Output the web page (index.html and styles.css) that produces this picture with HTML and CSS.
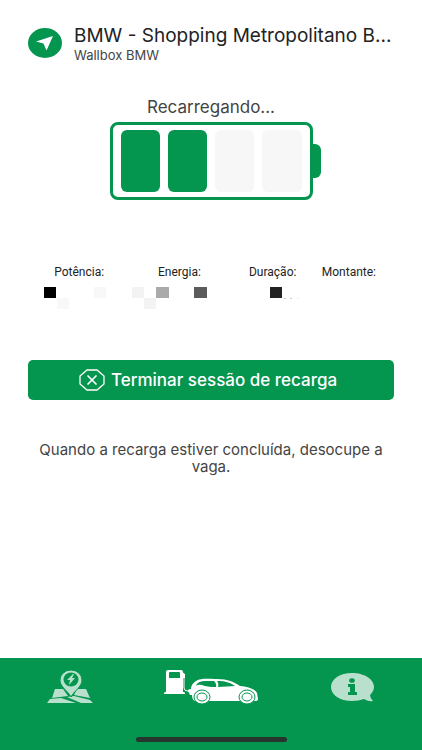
FILE: index.html
```html
<!DOCTYPE html>
<html lang="pt">
<head>
<meta charset="utf-8">
<meta name="viewport" content="width=device-width, initial-scale=1">
<title>Recarregando</title>
<link rel="stylesheet" href="styles.css">
</head>
<body>
<header class="station">
  <a class="station-link" href="#" aria-label="Navegar">
    <svg width="34" height="30" viewBox="0 0 34 30" aria-hidden="true">
      <ellipse cx="17" cy="15" rx="17" ry="15" fill="#04954f"/>
      <path d="M25 8 8 13.500 15.500 15.500 18.500 22.500Z" fill="#fff"/>
    </svg>
  </a>
  <div class="station-text">
    <h1 class="station-name">BMW - Shopping Metropolitano B...</h1>
    <p class="station-type">Wallbox BMW</p>
  </div>
</header>
<main class="session">
  <p class="status">Recarregando...</p>
  <div class="battery">
    <div class="battery-case">
      <span class="cell cell-full"></span>
      <span class="cell cell-full"></span>
      <span class="cell"></span>
      <span class="cell"></span>
    </div>
    <span class="battery-tip"></span>
  </div>
  <dl class="stats">
    <div class="stat"><dt>Potência:</dt><dd>
      <svg width="100" height="24" viewBox="0 0 100 24" aria-hidden="true">
        <path fill="#000" d="M15 1h12v11H15z"/><path fill="#f8f8f8" d="M28 12h12v11H28zM65 1h12v11H65z"/>
      </svg></dd></div>
    <div class="stat"><dt>Energia:</dt><dd>
      <svg width="100" height="24" viewBox="0 0 100 24" aria-hidden="true">
        <path fill="#f3f3f3" d="M3 1h12v11H3zM15 12h12v11H15z"/><path fill="#aaa" d="M27 1h13v11H27z"/><path fill="#5b5b5b" d="M65 1h13v11H65z"/>
      </svg></dd></div>
    <div class="stat"><dt>Duração:</dt><dd>
      <svg width="86" height="24" viewBox="0 0 86 24" aria-hidden="true">
        <path fill="#222" d="M40 1h12v11H40z"/><path fill="#ccc" d="M54 12h2v1h-2zM60 12h2v1h-2z"/><path fill="#eee" d="M67 12h2v1h-2z"/>
      </svg></dd></div>
    <div class="stat"><dt>Montante:</dt><dd></dd></div>
  </dl>
  <button class="stop" type="button">
    <svg width="26" height="22" viewBox="0 0 26 22" fill="none" stroke="#fff" aria-hidden="true">
      <path d="M8 1h10l7 6v8l-7 6H8l-7-6V7z" stroke-width="1.300"/>
      <path d="m9 7 8 8m0-8-8 8" stroke-width="1.700" stroke-linecap="round"/>
    </svg>
    <span>Terminar sessão de recarga</span>
  </button>
  <p class="note">Quando a recarga estiver concluída, desocupe a vaga.</p>
</main>
<footer class="tabs">
  <nav class="tab-list">
    <a class="tab" href="#" aria-label="Mapa">
      <svg width="48" height="36" viewBox="0 0 48 36" aria-hidden="true">
        <g fill="#b9e0cc">
          <path d="M9 20h8l5 7-16 2zM1 34l3-4 11-1 15 5zM35 34l-14-6 7-1 16 4 3 3zM31 20h9l4 9-16-3z"/>
          <path d="M25 28c-3-6-11-10-11-17a11 10 0 0 1 22 0c0 7-8 11-11 17z" stroke="#04954f" stroke-width="1"/>
        </g>
        <ellipse cx="25" cy="10.500" rx="7.500" ry="7" fill="#04954f"/>
        <path d="m27 5-6 6h3l-1 5 6-7h-3l2-4z" fill="#b9e0cc"/>
      </svg>
    </a>
    <a class="tab" href="#" aria-label="Recarga" aria-current="page">
      <svg width="96" height="36" viewBox="0 0 96 36" aria-hidden="true">
        <path d="M5 1h13q2 0 2 2v20h1q1 0 1 2H1q0-2 1-2h1V3q0-2 2-2z" fill="#fff"/>
        <path d="M6 4q0-1 1-1h9q1 0 1 1v5H6z" fill="#04954f"/>
        <path d="m18 2 3 3v14q0 3 4 3h4" fill="none" stroke="#fff" stroke-width="1"/>
        <path d="M19 3l3 2v4h-3z" fill="#fff"/>
        <path d="M25 22q0-2 3-2 0-5 5-8c5-3 11-2 21-2 11 0 17 3 23 7 9 1 15 3 17 7l1 6q0 2-3 2H32q-3-1-3-6h-2z" fill="#fff"/>
        <path d="M33 17q1-5 10-5h8q3 3 2 6-9 0-14-2-4-1-6 1zM54 12c9 0 14 2 18 5l-17 1q1-4-1-6z" fill="#04954f"/>
        <g fill="#fff" stroke="#04954f"><ellipse cx="39" cy="28" rx="8" ry="7"/><ellipse cx="84" cy="28" rx="8" ry="7"/></g>
        <g fill="none" stroke="#04954f" stroke-width="1"><ellipse cx="39" cy="28" rx="5" ry="4"/><ellipse cx="84" cy="28" rx="5" ry="4"/></g>
      </svg>
    </a>
    <a class="tab" href="#" aria-label="Informações">
      <svg width="44" height="32" viewBox="0 0 44 32" aria-hidden="true">
        <path d="M22 2C10 2 1 8 1 16s9 14 21 14q7 0 12-2 5 3 9 2-3-3-3-6 4-4 4-8C44 8 34 2 22 2z" fill="#b9e0cc"/>
        <ellipse cx="22" cy="9.500" rx="2.800" ry="2.300" fill="#04954f"/>
        <path d="M18 13h7v8h2v3h-9v-3h2v-5h-2z" fill="#04954f"/>
      </svg>
    </a>
  </nav>
  <span class="home-bar"></span>
</footer>
</body>
</html>
```
FILE: styles.css
```css
* {
  box-sizing: border-box;
  margin: 0;
  padding: 0;
}

body {
  display: flex;
  flex-direction: column;
  min-height: 100vh;
  background: #fff;
  color: #444;
  font-family: Inter, "Liberation Sans", sans-serif;
}

.station {
  display: flex;
  align-items: center;
  gap: 12px;
  padding: 24px 28px 0;
}

.station-link,
.station-link svg,
.tab svg,
.stat svg {
  display: block;
}

.station-text {
  flex: 1;
  min-width: 0;
}

.station-name {
  overflow: hidden;
  color: #222;
  font-size: 19px;
  font-weight: 400;
  line-height: 24px;
  text-overflow: ellipsis;
  white-space: nowrap;
}

.station-type {
  font-size: 13px;
  line-height: 14px;
}

.session {
  flex: 1;
  padding: 35px 28px;
  text-align: center;
}

.status {
  font-size: 17px;
  line-height: 20px;
}

.battery {
  display: flex;
  align-items: center;
  justify-content: center;
  margin-top: 5px;
  padding-left: 8px;
}

.battery-case {
  display: flex;
  gap: 8px;
  width: 203px;
  height: 78px;
  padding: 5px 8px;
  border: 3px solid #04954f;
  border-radius: 8px;
}

.cell {
  flex: 1;
  border-radius: 6px;
  background: #f7f7f7;
}

.cell-full {
  background: #04954f;
}

.battery-tip {
  width: 8px;
  height: 34px;
  border-radius: 0 6px 6px 0;
  background: #04954f;
}

.stats {
  display: grid;
  grid-template-columns: 100fr 100fr 86fr 66fr;
  margin-top: 64px;
  padding: 0 12px 0 1px;
  color: #222;
  font-family: Roboto, "Liberation Sans", sans-serif;
  font-size: 12px;
  line-height: 16px;
}

.stat dd {
  height: 24px;
  margin-top: 6px;
}

.stop {
  display: flex;
  align-items: center;
  justify-content: center;
  gap: 6px;
  width: 100%;
  height: 40px;
  margin-top: 50px;
  padding-right: 6px;
  border: 0;
  border-radius: 5px;
  background: #04954f;
  color: #fff;
  font: 500 17px/20px Inter, "Liberation Sans", sans-serif;
}

.note {
  margin-top: 41px;
  padding: 0 6px;
  font-size: 15px;
  line-height: 17px;
}

.tabs {
  display: flex;
  flex-direction: column;
  align-items: center;
  justify-content: space-between;
  height: 92px;
  padding: 11px 0 8px;
  background: #04954f;
}

.tab-list {
  display: grid;
  grid-template-columns: repeat(3, 1fr);
  align-items: center;
  justify-items: center;
  width: 100%;
}

.home-bar {
  width: 151px;
  height: 5px;
  border-radius: 3px;
  background: #26352d;
}
```
